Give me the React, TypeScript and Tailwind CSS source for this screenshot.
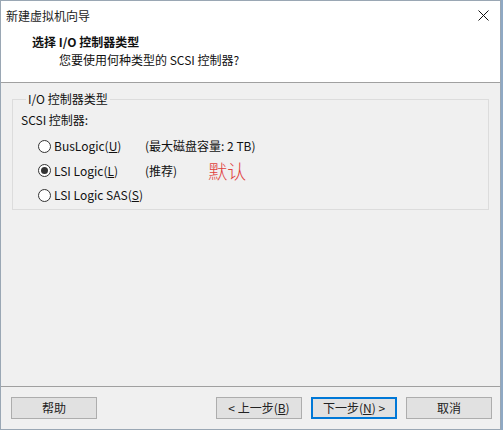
const font = { fontFamily: '"Noto Sans CJK SC", "Noto Sans", sans-serif' };

function Radio({ checked }: { checked?: boolean }) {
  return (
    <span className="flex size-[13px] shrink-0 items-center justify-center rounded-full border border-[#333] bg-white">
      {checked && <span className="size-[7px] rounded-full bg-[#333]" />}
    </span>
  );
}

function Btn({ children, focused }: { children: React.ReactNode; focused?: boolean }) {
  return (
    <button
      className={`flex h-[22px] w-[86px] items-center justify-center bg-[#e1e1e1] text-[12px] text-[#222] ${
        focused ? "border-2 border-[#0078d7]" : "border border-[#adadad]"
      }`}
    >
      {children}
    </button>
  );
}

export default function App() {
  const rows = [
    { label: <>BusLogic(<u>U</u>)</>, note: "(最大磁盘容量: 2 TB)" },
    { label: <>LSI Logic(<u>L</u>)</>, note: "(推荐)", checked: true, extra: true },
    { label: <>LSI Logic SAS(<u>S</u>)</>, note: "" },
  ];

  return (
    <div className="flex h-[430px] w-[503px] bg-[#8fa9c4]" style={font}>
      <div className="flex h-[430px] w-[501px] flex-col border border-[#9aa7b4] bg-[#f0f0f0] text-[12px] leading-[16px] text-[#111]">
        <div className="flex h-[29px] items-center justify-between bg-white pl-[5px] pr-[10px]">
          <span className="text-[12px] text-[#222]">新建虚拟机向导</span>
          <svg width="11" height="11" viewBox="0 0 11 11" className="mr-[1px]">
            <path d="M0.5 0.5 L10.5 10.5 M10.5 0.5 L0.5 10.5" stroke="#111" strokeWidth="1" />
          </svg>
        </div>

        <div className="h-[53px] border-b border-[#a0a0a0] bg-white pt-[4px]">
          <div className="pl-[31px] font-bold">选择 I/O 控制器类型</div>
          <div className="mt-[2px] pl-[58px]">您要使用何种类型的 SCSI 控制器?</div>
        </div>

        <div className="flex-1 px-[11px] pt-[8px]">
          <fieldset className="h-[119px] border border-[#dcdcdc] pl-[8px]">
            <legend className="ml-[5px] px-[2px]">I/O 控制器类型</legend>
            <div className="mt-[5px]">SCSI 控制器:</div>
            <div className="mt-[6px] flex flex-col pl-[17px]">
              {rows.map((r, i) => (
                <div key={i} className="flex h-[24.5px] items-center">
                  <Radio checked={r.checked} />
                  <span className="ml-[3px] w-[91px]">{r.label}</span>
                  <span>{r.note}</span>
                  {r.extra && (
                    <span className="ml-[31px] text-[19px] font-light leading-[20px] text-[#e0403c]">默认</span>
                  )}
                </div>
              ))}
            </div>
          </fieldset>
        </div>

        <div className="flex h-[43px] items-start border-t border-[#a0a0a0] pl-[10px] pr-[8px] pt-[10px]">
          <Btn>帮助</Btn>
          <div className="flex-1" />
          <div className="flex gap-[9px]">
            <Btn>
              &lt; 上一步(<u>B</u>)
            </Btn>
            <Btn focused>
              下一步(<u>N</u>) &gt;
            </Btn>
            <Btn>取消</Btn>
          </div>
        </div>
      </div>
    </div>
  );
}
